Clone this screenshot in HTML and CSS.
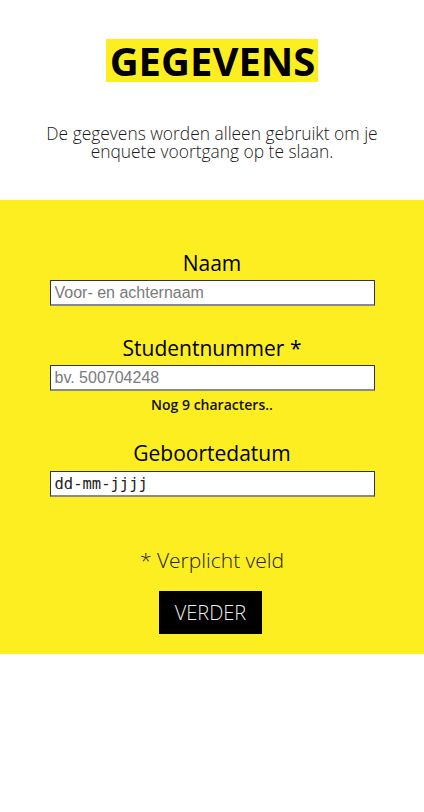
FILE: index.html
```html
<!DOCTYPE html>
<html lang="nl">
<head>
<meta charset="utf-8">
<title>Gegevens</title>
<link rel="stylesheet" href="styles.css">
</head>
<body>
<header class="intro">
  <h1 class="title"><span class="title-mark">GEGEVENS</span></h1>
  <p class="lead">De gegevens worden alleen gebruikt om je enquete voortgang op te slaan.</p>
</header>
<section class="form-panel">
  <form class="form">
    <label class="label label-first" for="naam">Naam</label>
    <input class="field" id="naam" type="text" placeholder="Voor- en achternaam">

    <label class="label label-next" for="nummer">Studentnummer *</label>
    <input class="field" id="nummer" type="text" placeholder="bv. 500704248">
    <p class="hint">Nog 9 characters..</p>

    <label class="label label-date" for="datum">Geboortedatum</label>
    <input class="field field-date" id="datum" type="text" value="dd-mm-jjjj">

    <p class="required">* Verplicht veld</p>
    <button class="submit" type="button">VERDER</button>
  </form>
</section>
</body>
</html>
```
FILE: styles.css
```css
html, body {
  margin: 0;
  padding: 0;
  background: #ffffff;
}
body {
  font-family: "Open Sans", "Noto Sans", sans-serif;
  color: #111;
}
.intro {
  padding-top: 39px;
  text-align: center;
}
.title {
  margin: 0;
  font-size: 40px;
  font-weight: 700;
  line-height: 43px;
}
.title-mark {
  display: inline-block;
  background: #fdee21;
  padding: 0 3px 0 4px;
  color: #000;
}
.lead {
  margin: 42px auto 0;
  width: 360px;
  font-size: 17.4px;
  font-weight: 300;
  line-height: 18px;
  color: #1a1a1a;
}
.form-panel {
  margin-top: 40px;
  background: #fdee21;
  padding: 48px 0 20px;
}
.form {
  display: flex;
  flex-direction: column;
  align-items: center;
}
.label {
  display: block;
  font-size: 21px;
  font-weight: 500;
  line-height: 30px;
  color: #000;
}
.label-next { margin-top: 27px; }
.label-date { margin-top: 23px; }
.field {
  box-sizing: border-box;
  width: 325px;
  height: 26px;
  margin-top: 2px;
  padding: 0 4px;
  border: 1px solid #333;
  border-bottom: 2px solid #8a8a8a;
  background: #fff;
  font-family: "Liberation Sans", Arial, sans-serif;
  font-size: 16px;
  color: #222;
  outline: none;
}
.field::placeholder {
  color: #7a7a7a;
}
.field-date {
  margin-top: 3px;
  font-family: "DejaVu Sans Mono", monospace;
  font-size: 15.5px;
  color: #222;
}
.hint {
  margin: 4px 0 0;
  font-size: 14px;
  font-weight: 600;
  line-height: 20px;
  color: #111;
}
.required {
  margin: 48px 0 0;
  font-size: 21px;
  font-weight: 300;
  line-height: 30px;
  color: #222;
}
.submit {
  margin-top: 16px;
  margin-right: 3px;
  width: 103px;
  height: 43px;
  border: 0;
  background: #000;
  color: #eee;
  font-family: "Open Sans", sans-serif;
  font-size: 20px;
  font-weight: 300;
  padding: 0;
}
```
